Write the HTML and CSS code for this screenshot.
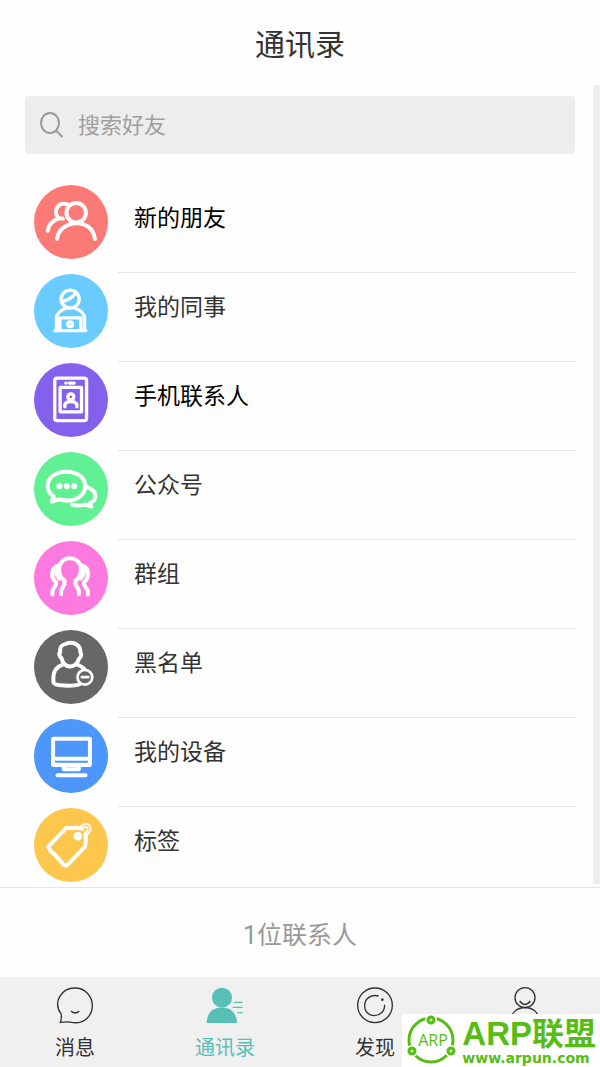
FILE: index.html
```html
<!DOCTYPE html>
<html lang="zh-CN">
<head>
<meta charset="utf-8">
<meta name="viewport" content="width=device-width, initial-scale=1">
<title>通讯录</title>
<link rel="stylesheet" href="styles.css">
</head>
<body>
<div class="app">
  <header class="header"><h1 class="title">通讯录</h1></header>

  <main class="content">
    <div class="scroll">
      <label class="search">
        <svg class="search-icon" viewBox="0 0 24 26" aria-hidden="true"><ellipse cx="10" cy="11" rx="9" ry="10"/><path d="M16 18.500 22.500 25"/></svg>
        <input class="search-input" type="search" placeholder="搜索好友" aria-label="搜索好友">
      </label>

      <ul class="list">
        <li><a class="row" href="#new">
          <svg class="avatar red" viewBox="43 29 221 221" aria-hidden="true"><circle cx="153.500" cy="139.500" r="110.500" class="disc"/><g class="line"><circle cx="169" cy="112" r="29"/><path d="M112 190C118 133 216 122 225 190M142 87C118 76 96 107 117 128C98 136 86 148 84 166M117 128 129 129"/></g></svg>
          <span class="label strong">新的朋友</span></a></li>
        <li><a class="row" href="#colleagues">
          <svg class="avatar sky" viewBox="43 296 221 221" aria-hidden="true"><circle cx="153.500" cy="406.500" r="110.500" class="disc"/><g class="line thin"><circle cx="151" cy="371" r="27"/><path d="M125 378Q150 376 168 353M138 399Q111 407 110 429V461M166 399Q193 407 194 429V461M120 461V427H183V461M105 465H198"/><circle cx="151" cy="446" r="7"/></g></svg>
          <span class="label">我的同事</span></a></li>
        <li><a class="row" href="#phone">
          <svg class="avatar violet" viewBox="43 22 221 221" aria-hidden="true"><circle cx="153.500" cy="132.500" r="110.500" class="disc"/><g class="line thin"><rect x="105" y="67" width="95" height="127" rx="7"/><rect x="121" y="95" width="64" height="73" rx="1"/><circle cx="153" cy="123" r="9"/><path d="M135 153V147Q138 137 153 137T171 147V153M138 82H139M149 82H163"/></g></svg>
          <span class="label strong">手机联系人</span></a></li>
        <li><a class="row" href="#official">
          <svg class="avatar green" viewBox="43 289 221 221" aria-hidden="true"><circle cx="153.500" cy="399.500" r="110.500" class="disc"/><g class="line"><path d="M201 394C233 404 234 434 210 441L214 452 196 446C181 450 167 449 157 446"/><path class="cut" d="M140 348C103 348 84 368 84 391C84 405 90 414 102 422L96 437 119 430C160 443 196 423 196 390C196 367 174 348 140 348Z"/></g><g class="solid"><circle cx="119" cy="391" r="9"/><circle cx="141" cy="391" r="9"/><circle cx="163" cy="391" r="9"/><path d="M99 420 92 442 119 434ZM218 439 217 458 199 449Z"/></g></svg>
          <span class="label">公众号</span></a></li>
        <li><a class="row" href="#groups">
          <svg class="avatar pink" viewBox="43 22 221 221" aria-hidden="true"><circle cx="153.500" cy="132.500" r="110.500" class="disc"/><g class="line"><path d="M124 181V169L134 151V140C122 133 118 121 118 107C118 62 183 62 183 107C183 121 179 133 167 140V151L177 169V181M98 182V171L109 151V145C93 133 91 100 119 94M204 182V171L192 151V145C209 133 211 100 183 94M117 103Q105 112 112 125L119 134M184 103Q196 112 189 125L182 134"/></g></svg>
          <span class="label">群组</span></a></li>
        <li><a class="row" href="#blocked">
          <svg class="avatar gray" viewBox="43 289 221 221" aria-hidden="true"><circle cx="153.500" cy="399.500" r="110.500" class="disc"/><g class="line"><path d="M121 349C121 330 138 332 145 328C166 324 183 337 181 355C186 360 184 371 178 374C173 389 163 398 151 398C138 398 129 388 125 373C118 369 117 357 121 356ZM130 392C111 399 101 409 101 430V445Q101 454 133 455C154 456 169 455 179 451M169 391Q183 396 193 405"/></g><g class="line badge"><circle class="cut" cx="195" cy="430" r="22"/><path d="M186 430H205"/></g></svg>
          <span class="label">黑名单</span></a></li>
        <li><a class="row" href="#devices">
          <svg class="avatar blue" viewBox="43 24 221 221" aria-hidden="true"><circle cx="153.500" cy="134.500" r="110.500" class="disc"/><g class="line"><path d="M100 83H210V161H100ZM100 143H210M132 162V174H177V162M113 192H197"/></g></svg>
          <span class="label">我的设备</span></a></li>
        <li><a class="row" href="#tags">
          <svg class="avatar amber" viewBox="43 291 221 221" aria-hidden="true"><circle cx="153.500" cy="401.500" r="110.500" class="disc"/><g class="line"><path d="M187 353C180 348 164 351 139 351L85 407Q93 423 106 431L132 461Q139 466 146 458L195 407Q200 391 197 370"/></g><circle cx="174" cy="375" r="13" class="solid"/><path class="string" d="M180 353C184 337 207 333 211 348C215 363 203 374 191 371M187 354C193 343 204 346 203 357Q202 365 192 364"/></svg>
          <span class="label">标签</span></a></li>
      </ul>
    </div>
    <div class="track" aria-hidden="true"></div>
  </main>

  <p class="count">1位联系人</p>

  <nav class="tabs">
    <a class="tab" href="#messages">
      <svg class="tab-icon" viewBox="168 318 114 114" aria-hidden="true"><path d="M184 403C157 367 184 324 225 324C255 324 277 348 277 377C277 406 255 431 220 428C208 425 198 425 181 427Q185 419 184 403ZM213 393Q225 405 238 393"/></svg>
      <span>消息</span></a>
    <a class="tab active" href="#contacts" aria-current="page">
      <svg class="tab-icon" viewBox="618 318 114 114" aria-hidden="true"><g class="fill"><circle cx="666" cy="353" r="30"/><path d="M620 429C621 396 643 380 666 384C690 380 711 399 711 429Z"/></g><path d="M703 367H727M698 382H728M712 398H728"/></svg>
      <span>通讯录</span></a>
    <a class="tab" href="#discover">
      <svg class="tab-icon" viewBox="168 318 114 114" aria-hidden="true"><circle cx="225" cy="376" r="52"/><path d="M236 348C213 342 194 355 194 377C194 417 254 417 254 374"/><circle class="dot" cx="247" cy="359" r="4"/></svg>
      <span>发现</span></a>
    <a class="tab" href="#me" aria-label="我">
      <svg class="tab-icon" viewBox="618 318 114 114" aria-hidden="true"><circle cx="675" cy="353" r="30"/><path d="M659 363Q675 384 691 363M630 429C630 367 720 367 720 429"/></svg></a>
  </nav>

  <aside class="watermark">
    <svg class="emblem" viewBox="0 0 50 50" aria-hidden="true"><circle cx="25" cy="25" r="22" class="ring"/><circle cx="25" cy="5" r="6" class="halo"/><circle cx="6" cy="36" r="6" class="halo"/><circle cx="45" cy="36" r="6" class="halo"/><circle cx="25" cy="5" r="3" class="node"/><circle cx="6" cy="36" r="3" class="node"/><circle cx="45" cy="36" r="3" class="node"/><text x="27" y="31" text-anchor="middle" class="emblem-text">ARP</text></svg>
    <div class="brand"><span class="brand-name">ARP<span class="brand-cjk">联盟</span></span><span class="brand-url">www.arpun.com</span></div>
  </aside>
</div>
</body>
</html>
```
FILE: styles.css
```css
* { box-sizing: border-box; }

body {
  margin: 0;
  background: #fefefe;
  color: #333;
  font-family: Roboto, "Noto Sans CJK SC", sans-serif;
}

a { color: inherit; text-decoration: none; }

.app {
  position: relative;
  display: flex;
  flex-direction: column;
  min-height: 100vh;
}

.header { padding: 25px 0 20px; text-align: center; }
.title { margin: 0; font-size: 30px; line-height: 40px; font-weight: 400; }

.content { display: flex; flex: 1; }
.scroll { flex: 1; min-width: 0; padding: 11px 0 0 25px; }
.track { width: 7px; margin-bottom: 3px; background: #eee; }

.search {
  display: flex;
  align-items: center;
  gap: 14px;
  margin-right: 18px;
  padding: 0 15px;
  height: 58px;
  border-radius: 4px;
  background: #ededed;
}
.search-icon {
  width: 24px;
  height: 26px;
  fill: none;
  stroke: #999;
  stroke-width: 2;
}
.search-input {
  flex: 1;
  min-width: 0;
  padding: 2px 0 0;
  border: 0;
  outline: 0;
  background: none;
  color: #333;
  font: inherit;
  font-size: 22px;
  line-height: 32px;
}
.search-input::placeholder { color: #a0a0a0; opacity: 1; }

.list { margin: 0; padding: 30px 16px 0 9px; list-style: none; }
.row { display: flex; gap: 10px; }
.avatar { flex: none; width: 74px; height: 74px; }
.label {
  flex: 1;
  padding: 19px 16px 37px;
  border-bottom: 1px solid #e6e6e6;
  font-size: 23px;
  line-height: 32px;
}
.strong { color: #000; }
.list li:last-child .label { padding-bottom: 28px; border-bottom: 0; }

.red { color: #fc7a75; }
.sky { color: #69cbff; }
.violet { color: #8461ec; }
.green { color: #61f093; }
.pink { color: #fc79e0; }
.gray { color: #676767; }
.blue { color: #4d97fa; }
.amber { color: #fdc64d; }

.avatar { margin-top: 1px; }
.disc { fill: currentColor; }
.line {
  fill: none;
  stroke: #fff;
  stroke-width: 12;
  stroke-linecap: round;
  stroke-linejoin: round;
}
.thin { stroke-width: 10; }
.badge { stroke-width: 8; }
.cut { fill: currentColor; }
.solid { fill: #fff; }
.string { fill: none; stroke: #fff; stroke-width: 6; opacity: .85; }

.count {
  margin: 0;
  padding: 32px 0 25px;
  border-top: 1px solid #e4e4e4;
  color: #999;
  font-size: 25px;
  line-height: 32px;
  text-align: center;
}

.tabs { display: flex; background: #f0f0f0; }
.tab {
  display: flex;
  flex: 1;
  flex-direction: column;
  align-items: center;
  gap: 10px;
  padding: 9px 0 5px;
  font-size: 20px;
  line-height: 28px;
}
.active { color: #58bfb7; }
.tab-icon {
  width: 38px;
  height: 38px;
  fill: none;
  stroke: currentColor;
  stroke-width: 4;
}
.fill, .dot { fill: currentColor; stroke: none; }

.watermark {
  position: absolute;
  right: 0;
  bottom: 0;
  display: flex;
  gap: 6px;
  padding: 1px 4px 1px 4px;
  background: #fff;
  color: #56bd12;
}
.emblem { width: 50px; height: 50px; }
.ring { fill: none; stroke: currentColor; stroke-width: 3; }
.halo { fill: #fff; }
.node { fill: #c5eda9; stroke: currentColor; stroke-width: 3; }
.emblem-text { fill: currentColor; font-family: "Open Sans", sans-serif; font-size: 16px; }
.brand { display: flex; flex-direction: column; }
.brand-name {
  font-family: "Liberation Sans", sans-serif;
  font-size: 33px;
  font-weight: 700;
  line-height: 33px;
}
.brand-cjk { font-family: "Noto Sans CJK SC", sans-serif; font-size: 32px; }
.brand-url {
  font-family: "DejaVu Sans", sans-serif;
  font-size: 14px;
  font-weight: 700;
  line-height: 16px;
}
```
